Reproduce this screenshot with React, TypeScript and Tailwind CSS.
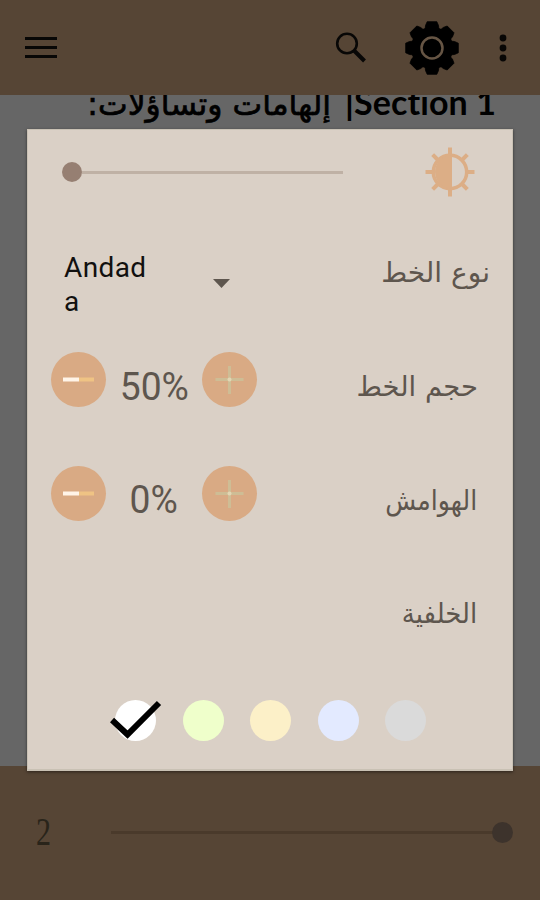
import React from "react";

function Stepper({ value }: { value: string }) {
  return (
    <div className="flex items-center pl-[23px]">
      <RoundButton kind="minus" />
      <span className="relative top-[7px] w-[96px] text-center text-[38px] leading-[44px] text-[#5e564e]">
        <span className="inline-block scale-x-[0.98]">{value}</span>
      </span>
      <RoundButton kind="plus" />
    </div>
  );
}

function RoundButton({ kind }: { kind: "minus" | "plus" }) {
  return (
    <button className="flex size-[55px] shrink-0 items-center justify-center rounded-full bg-[#d9aa84]">
      <svg width="55" height="55" viewBox="0 0 55 55">
        {kind === "minus" ? (
          <>
            <path d="M12 27.5h16" stroke="#fff4e8" strokeWidth="4" />
            <path d="M28 27.5h15" stroke="#efc384" strokeWidth="4" />
          </>
        ) : (
          <>
            <path d="M13.5 27.5h28M27.5 14v28" stroke="#cebd95" strokeWidth="3" />
            <circle cx="27.5" cy="27.5" r="2" fill="#e3d6b4" />
          </>
        )}
      </svg>
    </button>
  );
}

function Label({ children, className }: { children: string; className: string }) {
  return (
    <span dir="rtl" className={"origin-right whitespace-nowrap font-['DejaVu_Sans',sans-serif] text-[28px] leading-[40px] text-[#5e564e] " + className}>
      {children}
    </span>
  );
}

const rays = [0, 45, 90, 135, 180, 225, 270, 315];

export default function App() {
  return (
    <div className="relative flex h-[900px] w-[540px] flex-col overflow-hidden bg-[#666] font-[Roboto,sans-serif]">
      <header className="z-10 flex h-[95px] shrink-0 items-center bg-[#564535]">
        <svg className="ml-[25px]" width="32" height="24" viewBox="0 0 32 24">
          <path d="M0 2.500h32M0 11.500h32M0 20.500h32" stroke="#080706" strokeWidth="3" />
        </svg>
        <svg className="ml-[278px]" width="32" height="32" viewBox="0 0 32 32" fill="none" stroke="#080706">
          <circle cx="12" cy="11.5" r="9.8" strokeWidth="2.6" />
          <path d="M19 18.5L29.5 29" strokeWidth="4" />
        </svg>
        <svg className="ml-[37px]" width="56" height="56" viewBox="-28 -28 56 56">
          {rays.map((a) => (
            <path key={a} transform={`rotate(${a})`} d="M-7 -17L-6.500 -22.500L-4.800 -26.300H4.800L6.500 -22.500L7 -17Z" fill="#000" stroke="#000" strokeWidth="0.8" strokeLinejoin="round" />
          ))}
          <circle r="21.2" fill="#000" />
          <circle r="10.5" fill="#000" stroke="#665544" strokeWidth="2.5" />
        </svg>
        <svg className="ml-[39px]" width="8" height="28" viewBox="0 0 8 28" fill="#080706">
          <circle cx="4" cy="4" r="3.4" />
          <circle cx="4" cy="14" r="3.4" />
          <circle cx="4" cy="24" r="3.4" />
        </svg>
      </header>

      <main className="h-[671px] shrink-0 overflow-hidden">
        <h1 dir="rtl" className="-mt-[15px] mr-[44px] flex h-[44px] items-baseline whitespace-nowrap font-[Lato,'DejaVu_Sans',sans-serif] text-[34px] font-bold leading-[44px] text-black [font-variant-ligatures:no-common-ligatures]">
          <bdi className="tracking-[0.1px]">Section 1</bdi>
          <span className="ml-[14px]">|</span>
          <span className="origin-right font-['DejaVu_Sans',sans-serif] text-[31.5px] font-normal [-webkit-text-stroke:0.7px_black]">إلهامات وتساؤلات:</span>
        </h1>
      </main>

      <footer className="flex h-[134px] shrink-0 items-center bg-[#564535] pb-[2px]">
        <span className="ml-[36px] w-[75px] font-['Liberation_Serif',serif] text-[40px] leading-[40px] text-[#29241a]">
          <span className="inline-block origin-left scale-x-[0.75]">2</span>
        </span>
        <div className="h-[3px] w-[382px] bg-[#4a3a2b]" />
        <div className="-ml-px size-[21px] rounded-full bg-[#3d332c]" />
      </footer>

      <section role="dialog" className="absolute left-[27px] top-[129px] z-20 flex h-[642px] w-[486px] flex-col border border-b-2 border-[#c9c1b4] bg-[#dad0c6] shadow-[0_1px_3px_rgba(0,0,0,0.5)]">
        <div className="flex h-[85px] items-center pb-px">
          <div className="ml-[34px] size-[20px] rounded-full bg-[#967f72]" />
          <div className="h-[3px] w-[261px] bg-[#bfb1a5]" />
          <svg className="ml-[82px]" width="50" height="50" viewBox="-25 -25 50 50">
            {rays.map((a) => (
              <path key={a} transform={`rotate(${a})`} d="M0 -17V-24.5" stroke="#dcae86" strokeWidth="4" />
            ))}
            <circle r="16.7" fill="none" stroke="#dcae86" strokeWidth="3.5" />
            <path d="M2 -17A17 17 0 1 0 2 17Z" fill="#dcae86" />
          </svg>
        </div>

        <div className="flex h-[107px] justify-between">
          <div className="flex h-full items-start pl-[36px] pt-[36px]">
            <span className="w-[92px] break-all text-[28px] leading-[34px] tracking-[0.4px] text-[#11100f]">Andada</span>
            <svg className="ml-[57px] mt-[28px]" width="17" height="9" viewBox="0 0 17 9">
              <path d="M0 0H17L8.5 9Z" fill="#5e564e" />
            </svg>
          </div>
          <Label className="mr-[22px] mt-[38px]">نوع الخط</Label>
        </div>

        <div className="flex h-[115px] items-center justify-between">
          <Stepper value="50%" />
          <Label className="mr-[34px] mt-[14px] scale-x-[0.98]">حجم الخط</Label>
        </div>

        <div className="flex h-[112px] items-center justify-between">
          <Stepper value="0%" />
          <Label className="mr-[35px] mt-[16px] scale-x-[0.9]">الهوامش</Label>
        </div>

        <div className="flex h-[122px] items-center justify-end">
          <Label className="mr-[35px] mt-[8px] scale-x-[0.93]">الخلفية</Label>
        </div>

        <div className="flex h-[98px] items-center gap-[26.5px] pl-[87px]">
          <div className="relative size-[41px] rounded-full bg-white">
            <svg className="absolute -left-[5px] top-0" width="52" height="40" viewBox="0 0 52 40">
              <path d="M2 20L17.500 34.500L49 3" fill="none" stroke="#000" strokeWidth="6" />
            </svg>
          </div>
          <div className="size-[41px] rounded-full bg-[#efffcb]" />
          <div className="size-[41px] rounded-full bg-[#fcf0c8]" />
          <div className="size-[41px] rounded-full bg-[#e3eaff]" />
          <div className="size-[41px] rounded-full bg-[#dadada]" />
        </div>
      </section>
    </div>
  );
}
